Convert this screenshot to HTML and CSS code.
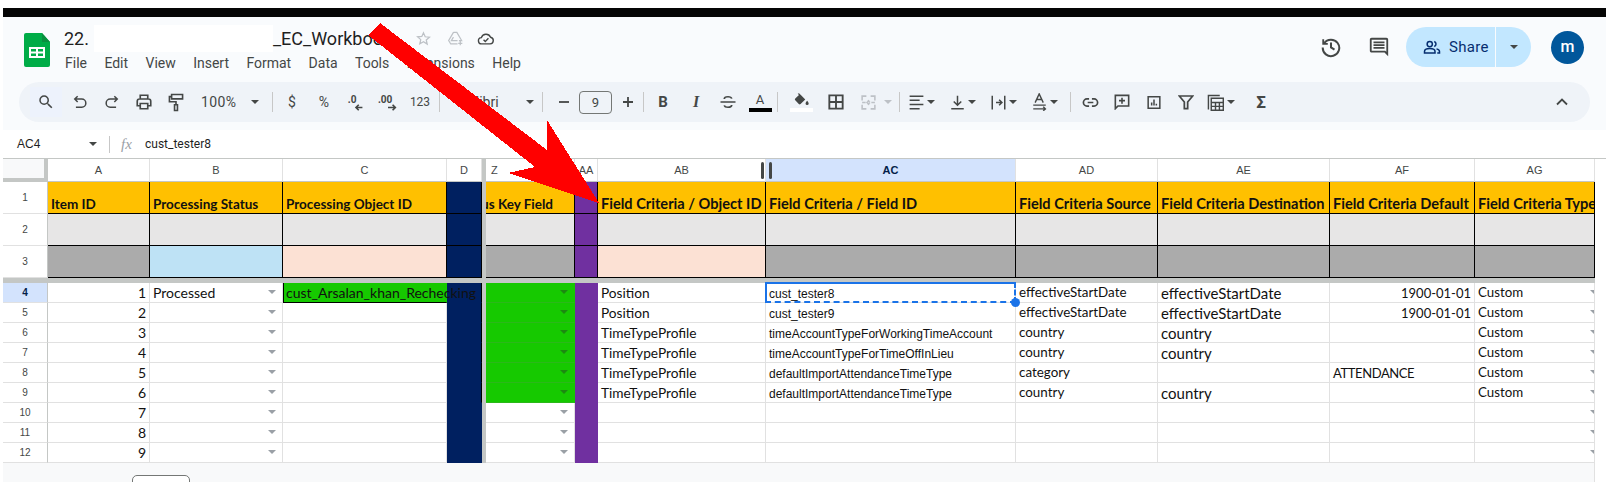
FILE: index.html
```html
<!DOCTYPE html>
<html lang="en">
<head>
  <meta charset="UTF-8" />
  <title>22. EC_Workbook - Sheets</title>
  <link rel="stylesheet" href="styles.css">
</head>
<body>
  <div class="topbar"></div>

  <div class="chrome">
    <div class="title-row">
      <svg class="logo" width="26" height="34" viewBox="0 0 26 34">
        <path fill="#00ac47" d="M2 0h16l8 9v23a2 2 0 0 1-2 2H2a2 2 0 0 1-2-2V2a2 2 0 0 1 2-2z"/>
        <path fill="#0a8f3f" d="M18 0l8 9h-8z"/>
        <path fill="#fff" d="M5 14h16v11H5z"/>
        <path fill="#00ac47" d="M7 16h5v2.500H7zM14 16h5v2.500h-5zM7 20.500h5V23H7zM14 20.500h5V23h-5z"/>
      </svg>
      <div class="doc">
        <div class="doc-name">
          <span>22.</span><span class="redact"></span><span>_EC_Workbook</span>
          <svg class="star" width="15" height="15" viewBox="0 0 24 24" fill="none" stroke="#bdc1c6" stroke-width="2"><path d="M12 3l2.700 6.200 6.800.6-5.100 4.500 1.500 6.700L12 17l-5.900 3.500 1.500-6.700-5.100-4.500 6.800-.6z"/></svg>
          <svg class="move" width="17" height="15" viewBox="0 0 24 22" fill="none" stroke="#bdc1c6" stroke-width="1.800"><path d="M9 2h5l7 12h-4M9 2L2 14l3 5h10M9 9l-3 5h9M19 15v6M16 18h6"/></svg>
          <svg class="cloud" width="18" height="14" viewBox="0 0 24 20" fill="none" stroke="#444746" stroke-width="2"><path d="M6 17a4.500 4.500 0 0 1-.6-9A7 7 0 0 1 18.500 7.500 4.800 4.800 0 0 1 18 17z"/><path d="M8.500 11l2.500 2.500 4.500-4.500"/></svg>
        </div>
        <nav class="menu">
          <span>File</span><span>Edit</span><span>View</span><span>Insert</span><span>Format</span><span>Data</span><span>Tools</span><span>Extensions</span><span>Help</span>
        </nav>
      </div>
      <div class="actions">
        <svg class="history" width="22" height="22" viewBox="0 0 24 24" fill="none" stroke="#444746" stroke-width="2.200"><path d="M4.500 8A9 9 0 1 1 3 12.500"/><path d="M3.500 3.500V8.500H8.500" stroke-width="2"/><path d="M12 7v5.500l3.800 2.300"/></svg>
        <svg class="comments" width="22" height="22" viewBox="0 0 24 24" fill="#444746"><path d="M21.990 4c0-1.100-.89-2-1.990-2H4c-1.100 0-2 .9-2 2v12c0 1.100.9 2 2 2h14l4 4-.01-18zM20 4v13.170L18.830 16H4V4h16zM6 12h12v2H6zm0-3h12v2H6zm0-3h12v2H6z"/></svg>
        <div class="share">
          <div class="share-main">
            <svg width="18" height="18" viewBox="0 0 24 24" fill="none" stroke="#062e6f" stroke-width="2"><circle cx="9" cy="8" r="3.500"/><path d="M2 20v-2c0-2.500 3.500-4 7-4s7 1.500 7 4v2z"/><path d="M15 4.700a3.500 3.500 0 0 1 0 6.600M18 14.500c2.200.6 4 1.800 4 3.500v2h-3"/></svg>
            <span>Share</span>
          </div>
          <div class="share-more"><i class="caret dark"></i></div>
        </div>
        <div class="avatar">m</div>
      </div>
    </div>

    <div class="toolbar">
      <button class="tb first"><svg width="18" height="18" viewBox="0 0 24 24" fill="#444746"><path d="M15.500 14h-.79l-.28-.27A6.470 6.470 0 0 0 16 9.500 6.500 6.500 0 1 0 9.500 16c1.610 0 3.090-.59 4.230-1.570l.27.28v.79l5 4.990L20.490 19l-4.990-5zm-6 0C7.010 14 5 11.990 5 9.500S7.010 5 9.500 5 14 7.010 14 9.500 11.990 14 9.500 14z"/></svg></button>
      <button class="tb undo"><svg width="14" height="14" viewBox="0 0 24 24" fill="none" stroke="#444746" stroke-width="2.600"><path d="M8 12L3 7l5-5M3 7h12a7 7 0 0 1 0 14H5"/></svg></button>
      <button class="tb"><svg width="14" height="14" viewBox="0 0 24 24" fill="none" stroke="#444746" stroke-width="2.600"><path d="M16 12l5-5-5-5M21 7H9a7 7 0 0 0 0 14h10"/></svg></button>
      <button class="tb"><svg width="18" height="18" viewBox="0 0 24 24" fill="none" stroke="#444746" stroke-width="2.200"><path d="M7 8V3h10v5M7 17H3v-6a3 3 0 0 1 3-3h12a3 3 0 0 1 3 3v6h-4M7 14h10v7H7z"/></svg></button>
      <button class="tb"><svg width="16" height="19" viewBox="0 0 20 26" fill="none" stroke="#444746" stroke-width="2.200"><path d="M4 2h15v6H4zM4 5H1v7h9v4M8 16h4v8H8z"/></svg></button>
      <div class="tb-select zoomer"><span>100%</span><i class="caret dark"></i></div>
      <i class="sep"></i>
      <button class="tb txt">$</button>
      <button class="tb txt">%</button>
      <button class="tb"><svg width="22" height="22" viewBox="0 0 24 24" fill="none" stroke="#444746"><text x="3" y="13" class="svg-num">.0</text><path stroke-width="1.800" d="M19 18h-7M15 15l-3 3 3 3"/></svg></button>
      <button class="tb"><svg width="24" height="22" viewBox="0 0 26 24" fill="none" stroke="#444746"><text x="2" y="13" class="svg-num">.00</text><path stroke-width="1.800" d="M13 18h8M18 15l3 3-3 3"/></svg></button>
      <button class="tb txt small">123</button>
      <i class="sep"></i>
      <div class="tb-select fontname"><span>Calibri</span><i class="caret dark"></i></div>
      <i class="sep wide"></i>
      <button class="tb step"><svg width="14" height="14" viewBox="0 0 14 14" stroke="#444746" stroke-width="1.800"><path d="M2 7h10"/></svg></button>
      <div class="size-box">9</div>
      <button class="tb step"><svg width="14" height="14" viewBox="0 0 14 14" stroke="#444746" stroke-width="1.800"><path d="M2 7h10M7 2v10"/></svg></button>
      <i class="sep tight"></i>
      <button class="tb bold">B</button>
      <button class="tb ital">I</button>
      <button class="tb"><svg width="18" height="18" viewBox="0 0 24 24" fill="none" stroke="#444746" stroke-width="2.200"><path d="M2 12h20M17 7.500C16.500 5.500 14.500 5 12 5S7 6 7 8M7 16.500C7.500 18.500 9.500 19 12 19s5-1 5-3"/></svg></button>
      <button class="tb color"><span class="letter">A</span><i class="swatch black"></i></button>
      <i class="sep near"></i>
      <button class="tb color"><svg width="15" height="14" viewBox="0 0 24 22" fill="#444746"><path d="M6 1l2-1 3 3 7 7-7.500 7.500a2 2 0 0 1-2.800 0L2 11.500a2 2 0 0 1 0-2.800L8 3z"/><path d="M21 12c1.500 2 2.500 3 2.500 4.500a2.500 2.500 0 0 1-5 0c0-1.500 1-2.500 2.500-4.500z"/></svg><i class="swatch white"></i></button>
      <button class="tb borders"><svg width="16" height="16" viewBox="0 0 24 24" fill="none" stroke="#444746" stroke-width="2.800"><path d="M2 2h20v20H2zM12 2v20M2 12h20"/></svg></button>
      <button class="tb"><svg width="17" height="17" viewBox="0 0 24 24" fill="none" stroke="#bdc1c6" stroke-width="2.200"><path d="M3 9V3h6M15 3h6v6M21 15v6h-6M9 21H3v-6M3 12h5M16 12h5M11 9l3 3M13 9l-3 3 3 3M11 15l3-3"/></svg></button>
      <i class="caret light merge-caret"></i>
      <i class="sep"></i>
      <div class="tb-drop"><svg width="15" height="15" viewBox="0 0 24 24" stroke="#444746" stroke-width="2.400"><path d="M1 2h22M1 8.500h16M1 15h22M1 22h16"/></svg><i class="caret dark"></i></div>
      <div class="tb-drop"><svg width="15" height="15" viewBox="0 0 24 24" fill="none" stroke="#444746" stroke-width="2.400"><path d="M12 1v15M6 10.500l6 6 6-6M2 22h20"/></svg><i class="caret dark"></i></div>
      <div class="tb-drop"><svg width="15" height="15" viewBox="0 0 24 24" fill="none" stroke="#444746" stroke-width="2.400"><path d="M2 1v22M22 1v22M8 12h9M13 7.500l4.500 4.500-4.500 4.500" /></svg><i class="caret dark"></i></div>
      <div class="tb-drop"><svg width="15" height="18" viewBox="0 0 24 28" fill="none" stroke="#444746" stroke-width="2.200"><path d="M5 15L11.500 1l6.500 14M7.500 10h8M2 19h20M2 25h19M18 21.500l3.500 3.500-3.500 3"/></svg><i class="caret dark"></i></div>
      <i class="sep"></i>
      <button class="tb"><svg width="17" height="17" viewBox="0 0 24 24" fill="none" stroke="#444746" stroke-width="2.400"><path d="M10 7H7a5 5 0 0 0 0 10h3M14 7h3a5 5 0 0 1 0 10h-3M8 12h8"/></svg></button>
      <button class="tb"><svg width="16" height="16" viewBox="0 0 24 24" fill="none" stroke="#444746" stroke-width="2.400"><path d="M2 2h20v16H6l-4 4zM12 5.500v9M7.500 10h9"/></svg></button>
      <button class="tb"><svg width="14" height="15" viewBox="0 0 24 24" fill="none" stroke="#444746" stroke-width="2.600"><path d="M2 2h20v20H2zM8 17v-5M12 17V7M16 17v-3"/></svg></button>
      <button class="tb"><svg width="16" height="16" viewBox="0 0 24 24" fill="none" stroke="#444746" stroke-width="2.600"><path d="M2 3h20l-7.500 9v10h-5V12z"/></svg></button>
      <div class="tb-drop calc"><svg width="17" height="17" viewBox="0 0 24 24" fill="none" stroke="#444746" stroke-width="2"><path d="M2 22V2h16M6 6h17v17H6zM6 12h17M6 17.500h17M12 12v11M17.500 12v11"/></svg><i class="caret dark"></i></div>
      <button class="tb txt sigma">Σ</button>
      <svg class="collapse" width="14" height="14" viewBox="0 0 14 14" fill="none" stroke="#444746" stroke-width="1.800"><path d="M2 9.500l5-5 5 5"/></svg>
    </div>
  </div>

  <div class="formula">
    <span class="cell-name">AC4</span>
    <i class="caret dark"></i>
    <i class="sep"></i>
    <span class="fx">fx</span>
    <span class="fvalue">cust_tester8</span>
  </div>

  <div class="sheet">
    <table>
      <colgroup>
        <col class="c-head"><col class="c-a"><col class="c-b"><col class="c-c"><col class="c-d"><col class="c-fr"><col class="c-z"><col class="c-aa"><col class="c-ab"><col class="c-ac"><col class="c-ad"><col class="c-ae"><col class="c-af"><col class="c-ag">
      </colgroup>
      <thead>
        <tr class="cols">
          <th class="corner"></th><th>A</th><th>B</th><th>C</th><th>D</th><th class="fr"></th><th class="zcol">Z</th><th>AA</th>
          <th>AB<i class="grip"></i></th><th class="picked">AC<i class="grip"></i></th><th>AD</th><th>AE</th><th>AF</th><th>AG</th>
        </tr>
      </thead>
      <tbody>
        <tr class="tall">
          <th>1</th><td class="hd lead">Item ID</td><td class="hd lead">Processing Status</td><td class="hd lead">Processing Object ID</td><td class="navy"></td><td class="fr"></td>
          <td class="hd lead clip-left"><span>Status Key Field</span></td><td class="purple"></td><td class="hd">Field Criteria / Object ID</td><td class="hd">Field Criteria / Field ID</td><td class="hd">Field Criteria Source</td><td class="hd">Field Criteria Destination</td><td class="hd">Field Criteria Default</td><td class="hd">Field Criteria Type</td>
        </tr>
        <tr class="tall">
          <th>2</th><td class="pale"></td><td class="pale"></td><td class="pale"></td><td class="navy"></td><td class="fr"></td>
          <td class="pale"></td><td class="purple"></td><td class="pale"></td><td class="pale"></td><td class="pale"></td><td class="pale"></td><td class="pale"></td><td class="pale"></td>
        </tr>
        <tr class="tall">
          <th>3</th><td class="grey"></td><td class="sky"></td><td class="peach"></td><td class="navy"></td><td class="fr"></td>
          <td class="grey"></td><td class="purple"></td><td class="peach"></td><td class="grey"></td><td class="grey"></td><td class="grey"></td><td class="grey"></td><td class="grey"></td>
        </tr>
        <tr class="freeze"><td colspan="14"></td></tr>
        <tr>
          <th class="picked">4</th><td class="num">1</td><td class="drop">Processed</td><td class="green-top">cust_Arsalan_khan_Rechecking</td><td class="navy"></td><td class="fr"></td>
          <td class="green drop"></td><td class="purple"></td><td class="ab">Position</td><td class="arial active">cust_tester8<i class="handle"></i></td><td class="ad">effectiveStartDate</td><td class="ae">effectiveStartDate</td><td class="date">1900-01-01</td><td class="ag drop-cut">Custom</td>
        </tr>
        <tr>
          <th>5</th><td class="num">2</td><td class="drop"></td><td></td><td class="navy"></td><td class="fr"></td>
          <td class="green drop"></td><td class="purple"></td><td class="ab">Position</td><td class="arial">cust_tester9</td><td class="ad">effectiveStartDate</td><td class="ae">effectiveStartDate</td><td class="date">1900-01-01</td><td class="ag drop-cut">Custom</td>
        </tr>
        <tr>
          <th>6</th><td class="num">3</td><td class="drop"></td><td></td><td class="navy"></td><td class="fr"></td>
          <td class="green drop"></td><td class="purple"></td><td class="ab">TimeTypeProfile</td><td class="arial">timeAccountTypeForWorkingTimeAccount</td><td class="ad">country</td><td class="ae">country</td><td></td><td class="ag drop-cut">Custom</td>
        </tr>
        <tr>
          <th>7</th><td class="num">4</td><td class="drop"></td><td></td><td class="navy"></td><td class="fr"></td>
          <td class="green drop"></td><td class="purple"></td><td class="ab">TimeTypeProfile</td><td class="arial">timeAccountTypeForTimeOffInLieu</td><td class="ad">country</td><td class="ae">country</td><td></td><td class="ag drop-cut">Custom</td>
        </tr>
        <tr>
          <th>8</th><td class="num">5</td><td class="drop"></td><td></td><td class="navy"></td><td class="fr"></td>
          <td class="green drop"></td><td class="purple"></td><td class="ab">TimeTypeProfile</td><td class="arial">defaultImportAttendanceTimeType</td><td class="ad">category</td><td></td><td class="att">ATTENDANCE</td><td class="ag drop-cut">Custom</td>
        </tr>
        <tr>
          <th>9</th><td class="num">6</td><td class="drop"></td><td></td><td class="navy"></td><td class="fr"></td>
          <td class="green drop"></td><td class="purple"></td><td class="ab">TimeTypeProfile</td><td class="arial">defaultImportAttendanceTimeType</td><td class="ad">country</td><td class="ae">country</td><td></td><td class="ag drop-cut">Custom</td>
        </tr>
        <tr>
          <th>10</th><td class="num">7</td><td class="drop"></td><td></td><td class="navy open"></td><td class="fr"></td>
          <td class="drop"></td><td class="purple"></td><td></td><td></td><td></td><td></td><td></td><td class="drop-cut"></td>
        </tr>
        <tr>
          <th>11</th><td class="num">8</td><td class="drop"></td><td></td><td class="navy open"></td><td class="fr"></td>
          <td class="drop"></td><td class="purple"></td><td></td><td></td><td></td><td></td><td></td><td class="drop-cut"></td>
        </tr>
        <tr>
          <th>12</th><td class="num">9</td><td class="drop"></td><td></td><td class="navy open"></td><td class="fr"></td>
          <td class="drop"></td><td class="purple"></td><td></td><td></td><td></td><td></td><td></td><td class="drop-cut"></td>
        </tr>
      </tbody>
    </table>
    <div class="tabs"><div class="tab"></div></div>
  </div>

  <svg class="arrow" width="620" height="210" viewBox="0 0 620 210">
    <polygon fill="#ff0000" shape-rendering="crispEdges" points="380,23 547,150 547,120 599,203 508,173 535,167 368,35"/>
  </svg>
</body>
</html>
```

FILE: styles.css
```css
body {
  margin: 0;
  height: 496px;
  overflow: hidden;
  background: white;
  font-family: 'Roboto', sans-serif;
  color: #1f1f1f;
  position: relative;
}
i {
  display: block;
}
button {
  border: 0;
  background: none;
  padding: 0;
  font-family: inherit;
}

.topbar {
  margin: 8px 0 0 3px;
  height: 9px;
  background: #050505;
}
.chrome {
  margin-left: 3px;
  height: 113px;
  background: #f9fbfd;
  box-sizing: border-box;
}

/* title and menu */
.title-row {
  display: flex;
  height: 65px;
  box-sizing: border-box;
  padding: 8px 22px 0 21px;
}
.logo {
  margin: 8px 14px 0 0;
}
.doc-name {
  display: flex;
  align-items: center;
  height: 27px;
  font-size: 18px;
  line-height: 27px;
}
.redact {
  width: 179px;
  height: 27px;
  margin-left: 5px;
  background: white;
}
.star {
  margin-left: 24px;
}
.move {
  margin-left: 16px;
}
.cloud {
  margin-left: 13px;
}
.menu {
  display: flex;
  gap: 17.400px;
  margin: 2px 0 0 1px;
  font-size: 14px;
  line-height: 18px;
  color: #444746;
}
.actions {
  display: flex;
  align-items: center;
  margin-left: auto;
  height: 40px;
  margin-top: 2px;
}
.comments {
  margin-left: 26px;
}
.share {
  display: flex;
  margin-left: 16px;
  height: 40px;
  width: 125px;
  border-radius: 20px;
  overflow: hidden;
  background: #c2e7ff;
  color: #062e6f;
  font-size: 15px;
  letter-spacing: 0.3px;
}
.share-main {
  width: 90px;
  display: flex;
  align-items: center;
  gap: 8px;
  padding-left: 17px;
  box-sizing: border-box;
  border-right: 1px solid #f9fbfd;
}
.share-more {
  flex: 1;
  display: flex;
  align-items: center;
  justify-content: center;
}
.avatar {
  width: 33px;
  height: 33px;
  margin-left: 20px;
  border-radius: 50%;
  background: #01579b;
  color: white;
  font-size: 16px;
  font-weight: 500;
  line-height: 31px;
  text-align: center;
}

/* toolbar */
.caret {
  width: 0;
  height: 0;
  flex: none;
  border-left: 4px solid transparent;
  border-right: 4px solid transparent;
  border-top: 4px solid #ccc;
}
.caret.dark {
  border-top-color: #444746;
}
.caret.light {
  border-top-color: #bdc1c6;
}
.sep {
  flex: none;
  width: 1px;
  height: 20px;
  margin: 0 3px;
  background: #c7c7c7;
}
.sep.wide {
  margin-right: 5px;
}
.sep.tight {
  margin: 0 3px 0 0;
}
.sep.near {
  margin: 0 7px 0 1px;
}
.toolbar {
  display: flex;
  align-items: center;
  margin-left: 16px;
  width: 1571px;
  height: 40px;
  box-sizing: border-box;
  padding-left: 11px;
  border-radius: 20px;
  background: #eff3f8;
  color: #444746;
}
.tb {
  flex: none;
  width: 32px;
  height: 30px;
  display: flex;
  align-items: center;
  justify-content: center;
  color: #444746;
}
.tb.first {
  background: #edf2fc;
}
.tb.undo {
  margin-left: 2px;
}
.tb.borders {
  margin-left: 3px;
}
.txt {
  font-size: 14px;
}
.txt.small {
  font-size: 12px;
}
.tb-select {
  flex: none;
  display: flex;
  align-items: center;
  justify-content: space-between;
  box-sizing: border-box;
  font-size: 14px;
}
.zoomer {
  width: 74px;
  padding: 0 7px 0 9px;
  margin-right: 3px;
  letter-spacing: 0.4px;
}
.fontname {
  width: 96px;
  padding: 0 5px 0 16px;
}
.size-box {
  flex: none;
  width: 33px;
  height: 23px;
  box-sizing: border-box;
  border: 1px solid #747775;
  border-radius: 4px;
  text-align: center;
  font-size: 13px;
  line-height: 21px;
}
.tb.step {
  width: 31px;
}
.bold {
  font-weight: 700;
  font-size: 15px;
}
.ital {
  margin-left: 1px;
  font-style: italic;
  font-weight: 700;
  font-size: 16px;
  font-family: 'Liberation Serif', serif;
}
.color {
  flex-direction: column;
  gap: 1px;
}
.letter {
  font-size: 13px;
  line-height: 14px;
}
.swatch {
  width: 23px;
  height: 4px;
}
.swatch.black {
  background: black;
}
.swatch.white {
  background: white;
}
.merge-caret {
  margin: 0 4px 0 0;
}
.tb-drop {
  flex: none;
  width: 41px;
  display: flex;
  align-items: center;
  gap: 3px;
  padding-left: 6px;
  box-sizing: border-box;
}
.tb-drop.calc {
  width: 46px;
  padding-left: 5px;
}
.svg-num {
  font-family: 'Roboto', sans-serif;
  font-size: 11px;
  font-weight: 700;
  fill: #444746;
  stroke: none;
}
.sigma {
  width: 26px;
  font-size: 17px;
  font-weight: 700;
}
.collapse {
  margin-left: auto;
  margin-right: 21px;
}

/* formula bar */
.formula {
  display: flex;
  align-items: center;
  margin-left: 3px;
  height: 28px;
  font-size: 12px;
  color: #1f1f1f;
}
.cell-name {
  margin-left: 14px;
  width: 72px;
  font-family: 'Liberation Sans', sans-serif;
}
.formula .sep {
  height: 17px;
  margin: 0 0 0 12px;
}
.fx {
  margin-left: 11px;
  width: 24px;
  font-family: 'Liberation Serif', serif;
  font-style: italic;
  font-size: 15px;
  color: #9aa0a6;
}
.fvalue {
  font-family: 'Roboto', sans-serif;
}

/* sheet */
.sheet {
  margin-left: 3px;
  height: 324px;
  overflow: hidden;
  border-top: 1px solid #c4c7c5;
  box-sizing: border-box;
}
table {
  table-layout: fixed;
  border-collapse: separate;
  border-spacing: 0;
  width: 1592px;
  font-family: 'Lato', sans-serif;
  font-size: 14px;
  color: #111;
}
.c-head { width: 45px; }
.c-a { width: 102px; }
.c-b { width: 133px; }
.c-c { width: 164px; }
.c-d { width: 35px; }
.c-fr { width: 4px; }
.c-z { width: 89px; }
.c-aa { width: 23px; }
.c-ab { width: 168px; }
.c-ac { width: 250px; }
.c-ad { width: 142px; }
.c-ae { width: 172px; }
.c-af { width: 145px; }
.c-ag { width: 120px; }

th, td {
  box-sizing: border-box;
  height: 20px;
  padding: 0 3px;
  white-space: nowrap;
  border-right: 1px solid #e1e1e1;
  border-bottom: 1px solid #e1e1e1;
  vertical-align: bottom;
  line-height: 18px;
}
th {
  padding: 0;
  font-family: 'Liberation Sans', sans-serif;
  font-size: 10px;
  font-weight: 400;
  color: #444746;
  text-align: center;
  vertical-align: middle;
  background: white;
  border-right-color: #c4c7c5;
}
.cols th {
  position: relative;
  height: 23px;
  font-size: 11px;
  border-right-color: #e1e1e1;
  border-bottom: 1px solid #c4c7c5;
}
.cols .zcol {
  text-align: left;
  padding-left: 5px;
}
.cols .corner {
  background: #f8f9fa;
  border-right: 4px solid #c4c7c5;
  border-bottom: 4px solid #c4c7c5;
}
th.picked {
  background: #d3e3fd;
  color: #041e49;
  font-weight: 700;
}
.grip {
  position: absolute;
  top: 3px;
  right: 1px;
  width: 3px;
  height: 17px;
  border-radius: 2px;
  background: #444746;
}
.picked .grip {
  right: auto;
  left: 3px;
}
.tall th, .tall td {
  height: 32px;
}
.tall th {
  border-bottom-color: #e1e1e1;
}
.fr, .cols .fr {
  background: #c4c7c5;
  padding: 0;
  border-right: 0;
  border-bottom: 0;
}
.freeze td {
  height: 5px;
  padding: 0;
  line-height: 0;
  border: 0;
  background: #c4c7c5;
}
.hd {
  background: #ffc000;
  font-size: 14.600px;
  font-weight: 700;
  line-height: 18px;
  color: #111;
  border-color: #000;
  overflow: hidden;
}
.hd.lead {
  font-size: 13.500px;
}
.pale, .grey, .sky, .peach {
  border-color: #000;
}
.pale { background: #e7e6e6; }
.grey { background: #ababab; }
.sky { background: #bee2f5; }
.peach { background: #fce1d4; }
.navy {
  background: #002060;
  border-right-color: #000;
  border-bottom-color: #002060;
  padding: 0;
}
.tall .navy {
  border-bottom-color: #000;
}
.navy.open {
  border-right-color: #002060;
}
.purple {
  background: #7030a0;
  border-right-color: #7030a0;
  border-bottom-color: #7030a0;
  padding: 0;
}
.tall .purple {
  border-right-color: #000;
  border-bottom-color: #000;
}
.green {
  background: #16c900;
  border-right-color: #16c900;
  border-bottom-color: #2bb81a;
}
.green-top {
  background: #16c900;
  border-right-color: #16c900;
  border-bottom-color: #000;
  border-left: 1px solid #000;
  padding-left: 2px;
}
.clip-left {
  text-align: right;
  direction: rtl;
  padding-right: 22px;
}
.clip-left span {
  direction: ltr;
  unicode-bidi: embed;
}
.num {
  text-align: right;
}
.date {
  text-align: right;
  font-size: 13px;
}
.ab {
  font-size: 13.700px;
}
.ad {
  font-size: 13.400px;
  line-height: 19px;
}
.ae {
  font-size: 15px;
}
.ag {
  font-size: 13.300px;
  line-height: 19px;
}
.att {
  font-size: 13px;
  letter-spacing: -0.4px;
}
.arial {
  font-family: 'Liberation Sans', sans-serif;
  font-size: 12px;
  line-height: 16px;
}
.active {
  position: relative;
  z-index: 2;
}
.active::before {
  content: "";
  position: absolute;
  inset: -1px;
  border: 2px dashed #1a73e8;
  border-top-style: solid;
  border-left-style: solid;
}
.handle {
  position: absolute;
  right: -5px;
  bottom: -5px;
  width: 9px;
  height: 9px;
  border-radius: 50%;
  background: #1a73e8;
}
.drop, .drop-cut {
  position: relative;
}
.drop::after, .drop-cut::after {
  content: "";
  position: absolute;
  top: 7px;
  right: 6px;
  border-left: 4px solid transparent;
  border-right: 4px solid transparent;
  border-top: 4px solid #9aa0a6;
}
.green.drop::after {
  border-top-color: #1c8a10;
}
.drop-cut::after {
  right: 0;
  border-right: 0;
}
.tabs {
  width: 1592px;
  height: 19px;
  background: #f8f9fa;
  padding: 12px 0 0 129px;
  box-sizing: border-box;
  overflow: hidden;
  border-right: 1px solid #e1e1e1;
}
.tab {
  width: 58px;
  height: 20px;
  box-sizing: border-box;
  border: 1px solid #747775;
  border-radius: 5px;
  background: white;
}

.arrow {
  position: absolute;
  top: 0;
  left: 0;
  z-index: 5;
}
```
